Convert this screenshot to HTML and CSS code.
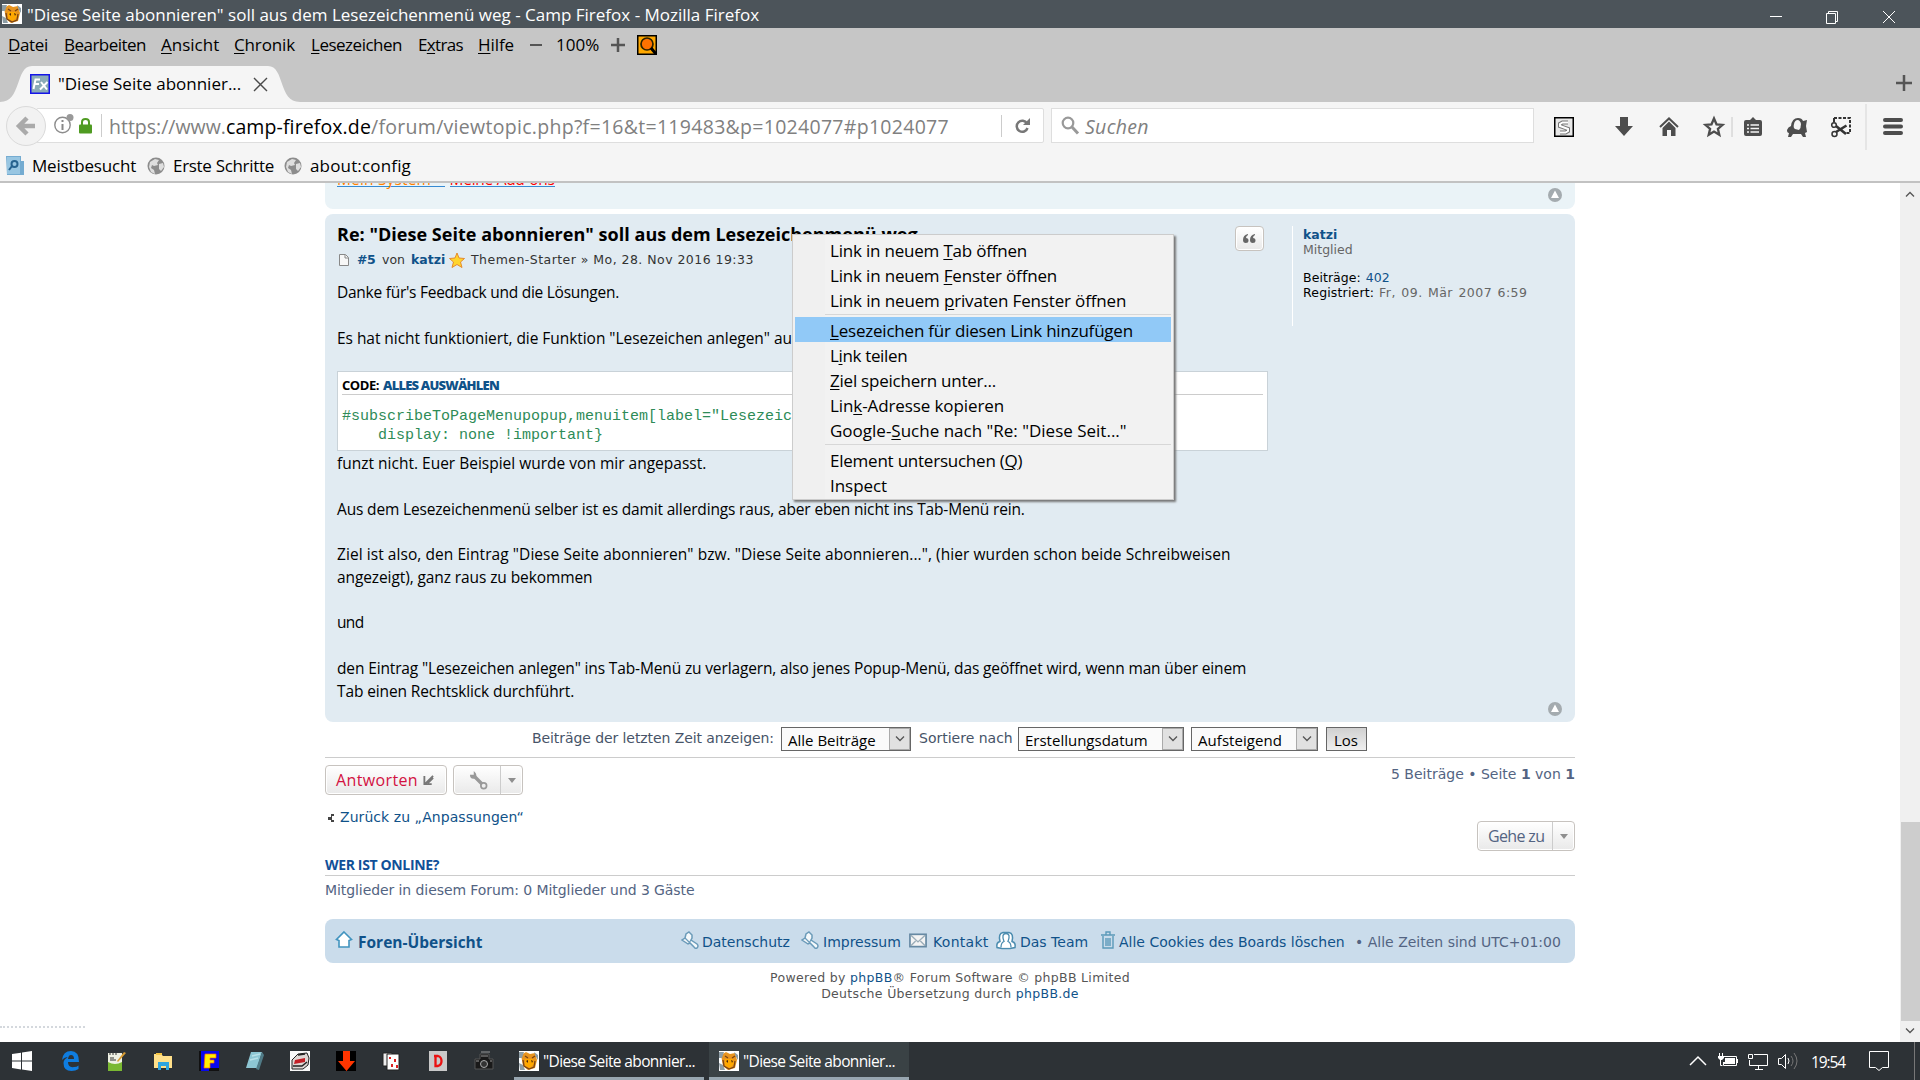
FILE: index.html
```html
<!DOCTYPE html>
<html lang="de">
<head>
<meta charset="utf-8">
<title>Camp Firefox</title>
<link rel="stylesheet" href="styles.css">
</head>
<body>
<svg width="0" height="0" class="defs">
  <symbol id="fox" viewBox="0 0 20 20"><rect width="20" height="20" fill="#fff"/><path d="M2 4 7 1l4 2 5-1 2 7-2 8-7 2-5-4z" fill="#e8941f"/><path d="M0 1h5L3 7H0zM0 12l4 2 2 5H1zM15 1l4 3v5l-2-3z" fill="#8d9da5"/><path d="M6 8h8l1 5-4 4-5-2z" fill="#ffa800"/><path d="M4 9l1 6 5 3 5-2 1-6M6 5l3 2m4 0 3-2" fill="none" stroke="#7a4312" stroke-width="1.300"/><path d="m7 10 2-1v3zm5-1 2 1-1 2z" fill="#4b2509"/></symbol>
  <symbol id="globe" viewBox="0 0 18 18"><circle cx="9" cy="9" r="8.500" fill="#8c8c8c"/><path d="M3 5 8 2l4 1-2 3 1 2-4 1-2-1-1 3 3 2 1 4-4-2-2-5zM12 7l4-1 1 4-3 4-2-2z" fill="#dedede"/></symbol>
  <symbol id="up" viewBox="0 0 14 14"><circle cx="7" cy="7" r="7" fill="#a4abaf"/><path d="M7 2.500 11 10H3z" fill="#fff"/></symbol>
  <symbol id="pin" viewBox="0 0 18 18"><path d="M8 1 11 4v3l-1 2 6 4q2 2 0 4-2 1-3-1L9 12l-2 1-6-4 3-2 1-4z" fill="#f5f9fb" stroke="#6b9bb9" stroke-width="1.500"/><path d="m4 7 4 4M10 9l-2 3" stroke="#6b9bb9" stroke-width="1.200"/></symbol>
  <symbol id="chev" viewBox="0 0 10 6"><path d="m1 .5 4 4 4-4" fill="none" stroke="#555" stroke-width="1.300"/></symbol>
  <symbol id="caret" viewBox="0 0 8 5"><path d="M0 0h8L4 5z" fill="#8f8f8f"/></symbol>
</svg>

<header class="titlebar">
  <svg class="i20"><use href="#fox"/></svg>
  <span class="title">"Diese Seite abonnieren" soll aus dem Lesezeichenmenü weg - Camp Firefox - Mozilla Firefox</span>
  <svg class="wctl" viewBox="0 0 130 14" fill="none" stroke="#fff"><path d="M0 6.500h12"/><path d="M56.500 3.500h9v10h-9zM58.500 3v-1.500h9v10h-2"/><path d="m113 1 12 12m0-12-12 12"/></svg>
</header>

<nav class="menubar">
  <span class="n34"><u>D</u>atei</span><span class="n52"><u>B</u>earbeiten</span><span><u>A</u>nsicht</span><span class="n14"><u>C</u>hronik</span><span class="n49"><u>L</u>esezeichen</span><span class="n65">E<u>x</u>tras</span><span class="n08"><u>H</u>ilfe</span>
  <svg viewBox="0 0 14 14"><path d="M0 7h12" stroke="#555" stroke-width="2"/></svg><span>100%</span><svg viewBox="0 0 14 14"><path d="M0 7h14M7 0v14" stroke="#555" stroke-width="2.500"/></svg>
  <svg class="i20" viewBox="0 0 20 20"><rect x=".75" y=".75" width="18.500" height="18.500" fill="#ffa800" stroke="#000" stroke-width="1.500"/><circle cx="10" cy="9" r="6" fill="#ff7200" stroke="#2d2200" stroke-width="1.700"/><path d="m14 13 5 6" stroke="#000" stroke-width="3"/></svg>
</nav>

<div class="tabs">
  <div class="tab">
    <svg class="tabshape" viewBox="0 0 300 36"><path d="M0 36C22 36 15 0 32 0H268C285 0 278 36 300 36z" fill="#f5f5f5"/></svg>
    <svg class="fav" viewBox="0 0 20 20"><rect x=".75" y=".75" width="18.500" height="18.500" fill="#8bacb8" stroke="#1515e8" stroke-width="1.500"/><path d="M3.500 15 5.500 5.500H10M5 10h4M11 8l6 7.500M17.500 8 10 15.500" stroke="#fff" stroke-width="2" fill="none"/></svg>
    <span class="tabtext">"Diese Seite abonnier...</span>
    <svg class="tabx" viewBox="0 0 13 13"><path d="m0 0 13 13m0-13L0 13" stroke="#4a4a4a" stroke-width="1.400"/></svg>
  </div>
  <svg class="newtab" viewBox="0 0 16 16"><path d="M0 8h16M8 0v16" stroke="#555" stroke-width="2.500"/></svg>
</div>

<div class="toolbar">
  <div class="url">
    <svg class="back" viewBox="0 0 40 40"><circle cx="20" cy="20" r="19.500" fill="#f2f2f2" stroke="#dadada"/><path d="M29 20H14m7-8-8 8 8 8" fill="none" stroke="#aaa" stroke-width="4.500"/></svg>
    <svg class="info" viewBox="0 0 20 20"><circle cx="8.500" cy="11" r="7.700" fill="none" stroke="#8c8c8c" stroke-width="1.400"/><path d="M8.500 6v2m0 2v6" stroke="#888" stroke-width="2"/><circle cx="16" cy="3.500" r="3.500" fill="#999"/></svg>
    <svg class="lock" viewBox="0 0 13 16"><rect y="6.500" width="13" height="9" rx="1" fill="#4f9b22"/><path d="M3 8V4q0-3 3.500-3T10 4v4" fill="none" stroke="#4f9b22" stroke-width="2"/></svg>
    <span class="urltext"><span>https://www.</span><b class="p11">camp-firefox.de</b><span class="p29">/forum/viewtopic.php?f=16&amp;t=119483&amp;p=1024077#p1024077</span></span>
    <svg class="reload" viewBox="0 0 15 16"><path d="M12 5.500A5.500 5.500 0 1 0 12.500 10" fill="none" stroke="#777" stroke-width="2.500"/><path d="M15 0v7H8z" fill="#777"/></svg>
  </div>
  <div class="search">
    <svg viewBox="0 0 18 18"><circle cx="7" cy="7" r="5.300" fill="none" stroke="#999" stroke-width="2.200"/><path d="m11 11 6 6.500" stroke="#999" stroke-width="3"/></svg>
    <i class="p29">Suchen</i>
  </div>
  <div class="tools">
    <svg viewBox="0 0 20 20"><rect x=".75" y=".75" width="18.500" height="18.500" fill="#e8e8e8" stroke="#000" stroke-width="1.500"/><path d="M14 5.500H8.500L6 7v2l8 3v2l-2.500 1.500H6" fill="none" stroke="#777" stroke-width="4"/><path d="M14 5.500H8.500L6 7v2l8 3v2l-2.500 1.500H6" fill="none" stroke="#fff" stroke-width="2"/></svg>
    <svg viewBox="0 0 20 20"><path d="M6 0h8v9h5l-9 10-9-10h5z" fill="#4d4d4d"/></svg>
    <svg viewBox="0 0 20 20"><path d="m1 10 9-8.500 9 8.500" fill="none" stroke="#4d4d4d" stroke-width="2"/><path d="m3.500 11 6.500-6.500 6.500 6.500v8H12v-6H8v6H3.500z" fill="#4d4d4d"/></svg>
    <svg viewBox="0 0 20 20"><path d="m10 1.500 2.500 5.800 6 .5-4.600 4 1.400 6-5.300-3.200-5.300 3.200 1.400-6-4.600-4 6-.5z" fill="none" stroke="#4d4d4d" stroke-width="2.300"/></svg>
    <svg viewBox="0 0 20 20"><path d="M10 0v20" stroke="#c8c8c8"/></svg>
    <svg viewBox="0 0 20 20"><path d="M3 3h4l3-3 3 3h4q2 0 2 2v12q0 2-2 2H3q-2 0-2-2V5q0-2 2-2z" fill="#4d4d4d"/><path d="M4 8h2m1.500 0H16M4 11.500h2m1.500 0H16M4 15h2m1.500 0H16" stroke="#f5f5f5" stroke-width="1.700"/></svg>
    <svg viewBox="0 0 20 20"><path d="M0 13q1-3 4-4 1-8 7-8 4 0 5 3l4-1-1 6 1 6-2 1 1 4h-3l-2-3H6l-2 3H1l1-4q-2 0-2-3z" fill="#4d4d4d"/><path d="M8 12q-2-1-1-5 1-4 3.500-4T14 7q0 4-2 6z" fill="#f5f5f5"/></svg>
    <svg viewBox="0 0 20 20" fill="none" stroke="#333"><path d="M3 1h16v15h-4" stroke-width="2" stroke-dasharray="3 1.500"/><path d="M3 1v4" stroke-width="2"/><circle cx="3" cy="8" r="2.300" stroke-width="1.500"/><circle cx="3.500" cy="17" r="2.500" stroke-width="1.500"/><path d="m5 9 10 8M5 15 15.500 8.500" stroke-width="2.600"/></svg>
    <svg class="longsep" viewBox="0 0 20 46"><path d="M10 0v46" stroke="#d5d5d5"/></svg>
    <svg viewBox="0 0 20 20"><path d="M2 3h16M2 9.500h16M2 16h16" stroke="#4d4d4d" stroke-width="4" stroke-linecap="round"/></svg>
  </div>
</div>

<div class="bookmarks">
  <svg class="i20" viewBox="0 0 20 20"><path d="M0 0h15v5h3v14H1z" fill="#75acd1"/><path d="M1 1h13v17H1z" fill="#98c6e2"/><circle cx="8.500" cy="8" r="3" fill="none" stroke="#27638f" stroke-width="2"/><path d="m6 10-3 4" stroke="#27638f" stroke-width="2"/></svg><span class="n20">Meistbesucht</span>
  <svg class="i18"><use href="#globe"/></svg><span class="n31">Erste Schritte</span>
  <svg class="i18"><use href="#globe"/></svg><span class="p16">about:config</span>
</div>

<div class="viewport">
<main>
  <section class="prev">
    <div class="sig"><span class="s1 p16">Mein System - </span><span class="s2 n29">Meine Add-ons</span></div>
    <svg class="up"><use href="#up"/></svg>
  </section>

  <article class="post">
    <div class="postbody">
      <div class="posthead">
        <h3>Re: "Diese Seite abonnieren" soll aus dem Lesezeichenmenü weg</h3>
        <span class="quote"><svg viewBox="0 0 13 9"><path d="M5 0Q0 1 0 6q0 3 2.800 3Q5.500 9 5.500 6.500T3 4Q3 2 5 1zM12 0Q7 1 7 6q0 3 2.800 3 2.700 0 2.700-2.500T10 4q0-2 2-3z" fill="#666"/></svg></span>
      </div>
      <p class="author">
        <svg viewBox="0 0 10 12"><path d="M.5.500h6l3 3v8h-9z" fill="#f7f7f7" stroke="#888"/><path d="M6 1v3h3" fill="none" stroke="#888"/></svg>
        <b class="n52">#5</b><span>von</span><b>katzi</b>
        <svg viewBox="0 0 16 16"><path d="m8 1 2 5 5.500.5-4 3.500 1.500 5.500-5-3-5 3L4.500 10l-4-3.500L6 6z" fill="#ffd52d" stroke="#e58b2d"/></svg>
        <span class="p46">Themen-Starter » Mo, 28. Nov 2016 19:33</span>
      </p>
      <p class="txt"><span class="n26">Danke für's Feedback und die Lösungen.</span><br><br><span class="n05">Es hat nicht funktioniert, die Funktion "Lesezeichen anlegen" au</span></p>
      <div class="codebox">
        <p><span class="n45">CODE:</span> <b class="n79">ALLES AUSWÄHLEN</b></p>
        <pre>#subscribeToPageMenupopup,menuitem[label="Lesezeic
    display: none !important}</pre>
      </div>
      <p class="txt after"><span>funzt nicht. Euer Beispiel wurde von mir angepasst.</span><br><br><span class="n16">Aus dem Lesezeichenmenü selber ist es damit allerdings raus, aber eben nicht ins Tab-Menü rein.</span><br><br><span class="p06">Ziel ist also, den Eintrag "Diese Seite abonnieren" bzw. "Diese Seite abonnieren...", (hier wurden schon beide Schreibweisen</span><br><span class="n10">angezeigt), ganz raus zu bekommen</span><br><br><span class="n65">und</span><br><br><span class="n14">den Eintrag "Lesezeichen anlegen" ins Tab-Menü zu verlagern, also jenes Popup-Menü, das geöffnet wird, wenn man über einem</span><br><span class="n12">Tab einen Rechtsklick durchführt.</span></p>
    </div>
    <aside class="profile">
      <p><b>katzi</b></p><p class="g">Mitglied</p><br>
      <p><span class="p06">Beiträge:</span> <a>402</a></p>
      <p><span class="p16">Registriert:</span> <span class="g p46">Fr, 09. Mär 2007 6:59</span></p>
    </aside>
    <svg class="up"><use href="#up"/></svg>
  </article>

  <div class="options">
    <span class="n08">Beiträge der letzten Zeit anzeigen:</span>
    <span class="select"><span>Alle Beiträge</span><i><svg><use href="#chev"/></svg></i></span>
    <span>Sortiere nach</span>
    <span class="select"><span>Erstellungsdatum</span><i><svg><use href="#chev"/></svg></i></span>
    <span class="select"><span class="p06">Aufsteigend</span><i><svg><use href="#chev"/></svg></i></span>
    <span class="los">Los</span>
  </div>

  <div class="actions">
    <span class="btn reply"><span class="p37">Antworten</span><svg viewBox="0 0 12 12"><path d="M1.500 1v9h8M2 10l9-9M5 9l6-6" fill="none" stroke="#777" stroke-width="2"/></svg></span>
    <span class="btn wrench"><svg viewBox="0 0 20 20"><path d="m5 5 10 10" stroke="#999" stroke-width="3.500"/><path d="M1 4q0 5 5 4 3-2 1-6L5 0v4H2z" fill="#999"/><circle cx="15.500" cy="15.500" r="3" fill="#eee" stroke="#999" stroke-width="1.800"/></svg><i><svg class="caret"><use href="#caret"/></svg></i></span>
    <span class="pages">5 Beiträge • Seite <b>1</b> von <b>1</b></span>
  </div>
  <div class="backrow"><svg viewBox="0 0 6 8"><path d="M6 0v2H4v4h2v2H3V6H0V3h3V0z" fill="#444"/></svg><a class="p06">Zurück zu „Anpassungen“</a></div>
  <div class="jump"><span class="btn"><span class="n65">Gehe zu</span><i><svg class="caret"><use href="#caret"/></svg></i></span></div>
  <h4 class="n34">WER IST ONLINE?</h4>
  <p class="online n08">Mitglieder in diesem Forum: 0 Mitglieder und 3 Gäste</p>

  <footer class="navbar">
    <svg viewBox="0 0 18 18"><path d="m8 1 7.500 7.500-2.500 1V16H3V9.500L.5 8.500z" fill="#fff" stroke="#4294bf" stroke-width="1.600"/></svg><b>Foren-Übersicht</b>
    <svg><use href="#pin"/></svg><a>Datenschutz</a>
    <svg><use href="#pin"/></svg><a>Impressum</a>
    <svg viewBox="0 0 19 16"><rect x="1" y="2" width="17" height="13" fill="#f4f4f4" stroke="#6689a3" stroke-width="1.800"/><path d="m2 3 7.500 7L17 3M2 14l5-5m5 0 5 5" fill="none" stroke="#9badb8" stroke-width="1.500"/></svg><a class="p29">Kontakt</a>
    <svg viewBox="0 0 18 17"><path d="M0 16q-1-5 3-6Q1 2 6 1h6q5 1 3 9 4 1 3 6l-5 1H5z" fill="#fff" stroke="#4b8caf" stroke-width="1.500"/><path d="M4 16q0-5 3-6Q4 2 9 2t2 8q3 1 3 6" fill="#fff" stroke="#4b8caf" stroke-width="1.300"/></svg><a>Das Team</a>
    <svg viewBox="0 0 18 18"><path d="M1 4h14M6 4V1h4v3M3 5v12h10V5M6 7v8m2-8v8m2-8v8" fill="none" stroke="#5b99b9" stroke-width="1.400"/></svg><a>Alle Cookies des Boards löschen</a>
    <span>• Alle Zeiten sind UTC+01:00</span>
  </footer>
  <div class="copy"><p>Powered by <a>phpBB</a>® Forum Software © phpBB Limited</p><p>Deutsche Übersetzung durch <a>phpBB.de</a></p></div>
</main>
<div class="scroll"><svg class="sa"><use href="#chev"/></svg><div class="thumb"></div><svg><use href="#chev"/></svg></div>
<div class="tiny"></div>
</div>

<div class="ctx">
  <div class="n20">Link in neuem <u>T</u>ab öffnen</div>
  <div class="n18">Link in neuem <u>F</u>enster öffnen</div>
  <div class="n16">Link in neuem <u>p</u>rivaten Fenster öffnen</div>
  <hr>
  <div class="hl n21"><u>L</u>esezeichen für diesen Link hinzufügen</div>
  <div class="n34">L<u>i</u>nk teilen</div>
  <div class="n23"><u>Z</u>iel speichern unter...</div>
  <div class="n10">Lin<u>k</u>-Adresse kopieren</div>
  <div>Google-<u>S</u>uche nach "Re: "Diese Seit..."</div>
  <hr>
  <div class="n23">Element untersuchen (<u>Q</u>)</div>
  <div class="n05">Inspect</div>
</div>

<footer class="taskbar">
  <svg viewBox="0 0 20 20"><path d="m0 3 9-1.300V9.500H0zM10 1.500 20 0v9.500H10zM0 10.500h9v8L0 17zM10 10.500h10V20l-10-1.500z" fill="#fff"/></svg>
  <svg viewBox="0 0 20 20"><path d="M1 9Q2 0 10 0q8 0 8 11H7q0 6 6 5 3 0 4.500-1.500V18q-3 2-7 2-8 0-8-8 0-4 5-6-4 0-6.500 3zm6-1h6q0-4-3-4Q7.500 4 7 8z" fill="#0f7de0"/></svg>
  <svg viewBox="0 0 20 20"><path d="M1 2h14v18H1z" fill="#eef0e4"/><path d="M1 11q7 4 14 0v9H1z" fill="#7ab832"/><path d="m10 10 7-9 2 1-8 9z" fill="#d79b32"/><path d="M4 6v4m2-4v4m2-2v2M3 2v2m3-2v2m3-2v2" stroke="#333"/></svg>
  <svg viewBox="0 0 20 20"><path d="M1 3h7l2 2h9v12H1z" fill="#ffe08a"/><path d="M3 2h6v2H3z" fill="#f4c544"/><path d="M5 11h11v8h-3v-4H8v4H5z" fill="#2fa5df"/></svg>
  <svg viewBox="0 0 20 20"><path d="M0 0h20v20H0z" fill="#0808ee"/><path d="M0 0h2v20H0zM10 17h10v3H10z" fill="#111"/><path d="M6 3h11v4h-6v2h4v3h-4v5H5z" fill="#fff000" stroke="#f60" stroke-width=".7"/></svg>
  <svg viewBox="0 0 20 20"><path d="M6 1h11l-5 16H1z" fill="#8dc6d3"/><path d="m17 1 2 3-5 15-3-1z" fill="#507b87"/><path d="m7 5 8-2M5 9l8-2" stroke="#b9e0e8" stroke-width="1.500"/></svg>
  <svg viewBox="0 0 20 20"><path d="M0 0h20v20H0z" fill="#f8f8f8"/><path d="M2 9 8 3l9-1 2 5-1 7-5 4H2z" fill="#ded7d4" stroke="#222"/><path d="m5 9 10-2v4L4 13z" fill="#c21f27"/><path d="M3 15h9l5-4M8 4l7-1" fill="none" stroke="#222" stroke-width="1.500"/></svg>
  <svg viewBox="0 0 20 20"><path d="M0 0h20v20H0z" fill="#000"/><path d="M7 0h7v10h5l-8.500 10L2 10h5z" fill="#ff3500"/></svg>
  <svg viewBox="0 0 20 20"><path d="M1 2h9v13H1z" fill="#eee" stroke="#222"/><path d="M5 3h12v16H5z" fill="#fff" stroke="#222"/><path d="M7 6h2v2H7zm5 2h2v3h-2zm-3 5h2v3H9zm5 1h2v3h-2z" fill="#d22"/></svg>
  <svg viewBox="0 0 20 20"><path d="M1 0h18v20H1z" fill="#c9c9c9"/><path d="M7.500 5v10H10q3.500-1 3.500-5T10 5H6" fill="none" stroke="#ea1111" stroke-width="2.300"/></svg>
  <svg viewBox="0 0 20 20"><path d="M1 8h5V3h9v5h4v10H1z" fill="#191919" stroke="#555"/><circle cx="10" cy="13" r="3.500" fill="#333" stroke="#aaa"/><path d="M7 1h9M7 5h7M2 10h3m11 0h2" stroke="#999"/></svg>
  <div class="task"><svg><use href="#fox"/></svg><span>"Diese Seite abonnier...</span></div>
  <div class="task on"><svg><use href="#fox"/></svg><span>"Diese Seite abonnier...</span></div>
  <div class="tray">
    <svg viewBox="0 0 20 20" fill="none" stroke="#fff"><path d="m2 14 8-8 8 8" stroke-width="1.500"/></svg>
    <svg viewBox="0 0 20 20"><path d="M5.500 5.500h13v9h-13v-3M19.500 8v4" fill="none" stroke="#fff"/><path d="M7 7h10v6H5v-2h2z" fill="#fff"/><path d="M1.500 2v3m3-3v3M2.500 8v6.500h2" fill="none" stroke="#fff"/><path d="M0 5h6v2L4 9H2L0 7z" fill="#fff"/></svg>
    <svg viewBox="0 0 20 20" fill="none" stroke="#fff"><path d="M6 3.500h13.500v11H1.500V9M10.500 15v3M7 18.500h8M.5 3.500h4v4h-4z"/></svg>
    <svg viewBox="0 0 20 20" fill="none" stroke="#fff"><path d="M.5 7.500h3l4-4v14l-4-4h-3z"/><path d="M10 7q2 3 0 6"/><path d="M13 5q4 5 0 10m3-13q6 8 0 16" stroke="#777"/></svg>
    <span class="time">19:54</span>
    <svg viewBox="0 0 20 20" fill="none" stroke="#fff"><path d="M.5.500h19v16h-6L10 19.500 6.500 16.500h-6z"/></svg>
  </div>
</footer>
</body>
</html>
```
FILE: styles.css
```css
* { box-sizing: border-box; }
body { margin: 0; width: 1920px; height: 1080px; overflow: hidden; background: #fff; font-family: "Open Sans", sans-serif; font-size: 17px; color: #000; }
p, h3, h4, pre { margin: 0; font-weight: normal; }
span, b, a, i, h3, .ctx div { white-space: nowrap; }
svg { display: block; flex: none; overflow: visible; }
.defs { position: absolute; }
.i20 { width: 20px; height: 20px; }
.i18 { width: 18px; height: 18px; }
u { text-decoration-thickness: 1px; text-underline-offset: 2px; }

/* letter-spacing steps: n = tighter, p = wider, in hundredths of a pixel */
.n05 { letter-spacing: -.05px; }
.n08 { letter-spacing: -.08px; }
.n10 { letter-spacing: -.1px; }
.n12 { letter-spacing: -.12px; }
.n14 { letter-spacing: -.14px; }
.n16 { letter-spacing: -.16px; }
.n18 { letter-spacing: -.18px; }
.n20 { letter-spacing: -.2px; }
.n21 { letter-spacing: -.21px; }
.n23 { letter-spacing: -.23px; }
.n26 { letter-spacing: -.26px; }
.n29 { letter-spacing: -.29px; }
.n31 { letter-spacing: -.31px; }
.n34 { letter-spacing: -.35px; }
.n45 { letter-spacing: -.45px; }
.n49 { letter-spacing: -.49px; }
.n52 { letter-spacing: -.52px; }
.n65 { letter-spacing: -.65px; }
.n79 { letter-spacing: -.79px; }
.p06 { letter-spacing: .06px; }
.p11 { letter-spacing: .11px; }
.p16 { letter-spacing: .16px; }
.p29 { letter-spacing: .29px; }
.p37 { letter-spacing: .37px; }
.p46 { letter-spacing: .46px; }

.titlebar { height: 28px; background: #4c545a; color: #fff; display: flex; align-items: center; padding-left: 2px; }
.titlebar .title { flex: 1; margin-left: 5px; line-height: 28px; padding-top: 1px; }
.wctl { width: 130px; height: 14px; margin: 6px 20px 0 0; }

.menubar { height: 31px; background: #c6c6c6; display: grid; grid-template-columns: 56px 97px 73px 77px 107px 60px 52px 26px 55px 26px 20px; padding: 1px 0 0 8px; align-items: center; line-height: 31px; }
.menubar svg { width: 14px; height: 14px; }
.menubar svg.i20 { width: 20px; height: 20px; }

.tabs { height: 43px; background: #c6c6c6; display: flex; justify-content: space-between; padding: 7px 8px 0 0; }
.tab { position: relative; width: 300px; height: 36px; display: flex; padding: 8px 0 0 30px; }
.tabshape { position: absolute; left: 0; top: 0; width: 300px; height: 36px; }
.fav { width: 20px; height: 20px; position: relative; }
.tabtext { position: relative; width: 182px; margin-left: 8px; line-height: 20px; }
.tabx { position: relative; width: 13px; height: 13px; margin: 4px 0 0 14px; }
.newtab { width: 16px; height: 16px; margin-top: 9px; }

.toolbar { height: 48px; background: #f5f5f5; display: flex; padding: 6px 0 0 36px; }
.url { width: 1008px; height: 35px; background: #fff; border: 1px solid #dedede; border-radius: 2px; display: flex; align-items: center; }
.back { width: 40px; height: 40px; margin-left: -31px; }
.info { width: 20px; height: 20px; margin: -3px 0 0 8px; }
.lock { width: 13px; height: 16px; margin-left: 5px; }
.urltext { font-size: 19.5px; color: #808080; border-left: 1px solid #ccc; margin-left: 9px; padding-left: 7px; line-height: 23px; height: 23px; width: 900px; }
.urltext > * { position: relative; top: 1px; }
.urltext b { color: #000; font-weight: normal; }
.reload { box-sizing: content-box; width: 15px; height: 16px; padding: 3px 0 3px 13px; border-left: 1px solid #ccc; }
.search { width: 483px; height: 35px; margin-left: 7px; background: #fff; border: 1px solid #dedede; display: flex; align-items: center; padding-left: 9px; }
.search svg { width: 18px; height: 18px; margin-top: -2px; }
.search i { font-size: 19.5px; color: #808080; margin-left: 6px; padding-top: 2px; }
.tools { display: grid; grid-template: 38px / 60px 45px 45px 18px 21px 44px 44px 25px 27px 20px; height: 36px; align-items: center; margin-left: 20px; }
.tools svg { width: 20px; height: 20px; }
.tools .longsep { height: 46px; }

.bookmarks { height: 33px; background: #f5f5f5; border-bottom: 2px solid #c2c2c2; display: grid; grid-template-columns: 26px 115px 26px 111px 26px 120px; align-items: center; padding-left: 6px; line-height: 30px; }
.bookmarks span { padding-top: 1px; }

.viewport { height: 859px; position: relative; display: flex; font-family: "DejaVu Sans", sans-serif; font-size: 14px; color: #536482; }
main { width: 1250px; margin-left: 325px; }
a { color: #105289; }
.up { width: 14px; height: 14px; }
.prev { height: 26px; background: #eaf3f7; border-radius: 0 0 8px 8px; display: flex; justify-content: space-between; padding: 0 13px 0 12px; overflow: hidden; }
.prev .up { margin-top: 5px; }
.sig { font: 15.5px/20px "Open Sans", sans-serif; margin-top: -14px; display: flex; gap: 5px; height: 18px; }
.s1 { color: #ff8000; border-bottom: 1px solid #368ad2; white-space: pre; }
.s2 { color: #f00; border-bottom: 1px solid #368ad2; }

.post { margin-top: 5px; height: 508px; background: #e1ebf2; border-radius: 8px; display: grid; grid-template-columns: 955px 256px 14px; padding: 8px 12px; color: #000; }
.post > .up { align-self: end; margin-bottom: -2px; }
.postbody { width: 931px; }
.posthead { display: flex; justify-content: space-between; height: 28px; }
.posthead h3 { font: bold 18px/24px "Open Sans", sans-serif; letter-spacing: .03px; }
.quote { width: 29px; height: 25px; margin: 4px 4px 0 0; border: 1px solid #c7c3bf; border-radius: 4px; background: linear-gradient(#fff, #e9e9e9); display: flex; align-items: center; justify-content: center; box-shadow: inset 0 0 0 1px #fff; }
.quote svg { width: 13px; height: 9px; }
.author { font-size: 12.5px; color: #333; height: 19px; display: grid; grid-template-columns: 18px 25px 29px 38px 22px 290px; align-items: center; padding-left: 2px; line-height: 19px; }
.author svg { width: 16px; height: 16px; }
.author svg:first-child { width: 10px; height: 12px; }
.author b, .profile b { color: #105289; }
.txt { font: 15.5px/22.75px "Open Sans", sans-serif; padding-top: 12px; height: 102px; }
.txt.after { padding-top: 1px; height: 250px; }
.codebox { height: 80px; background: #fff; border: 1px solid #c9d2d8; padding: 4px; }
.codebox p { font: bold 13px/19px "Open Sans", sans-serif; border-bottom: 1px solid #ccc; color: #000; height: 19px; display: flex; gap: 4px; }
.codebox b { color: #105289; }
.codebox pre { font: 15px/19px "Liberation Mono", monospace; color: #2e8b57; padding-top: 12px; }
.profile { border-left: 1px solid #fff; margin-top: 4px; height: 100px; padding: 1px 0 0 10px; font-size: 12.5px; line-height: 15px; }
.profile br { line-height: 12px; }
.profile .g { color: #666; }
.profile p + p:nth-of-type(n+3) { margin-top: -.5px; }
.profile p:nth-of-type(n+3) { word-spacing: 1px; position: relative; top: -2px; }

.options { height: 36px; border-bottom: 1px solid #ccc; display: grid; grid-template-columns: 249px 138px 99px 173px 135px 41px; padding: 5px 0 0 207px; line-height: 22px; color: #475468; }
.select { display: flex; height: 24px; border: 1px solid #666; width: 130px; background: #fafafa; justify-content: space-between; color: #000; padding-left: 6px; line-height: 24px; font-family: "Open Sans", sans-serif; font-size: 15px; }
.select:nth-child(4) { width: 166px; }
.select:nth-child(5) { width: 127px; }
.select i { width: 21px; height: 22px; background: #e1e1e1; border: 1px solid #aaa; display: flex; align-items: center; justify-content: center; }
.select svg { width: 10px; height: 6px; }
.los { height: 24px; border: 1px solid #666; background: linear-gradient(#d0d0d0, #efefef); color: #000; padding-left: 7px; line-height: 24px; font: 15px/24px "Open Sans", sans-serif; }
.actions { display: flex; padding-top: 7px; height: 45px; }
.btn { height: 30px; border: 1px solid #c7c3bf; border-radius: 4px; background: linear-gradient(#fff, #e9e9e9); box-shadow: inset 0 0 0 1px #fff; display: flex; align-items: center; padding-left: 10px; font-family: "Open Sans", sans-serif; font-size: 16px; }
.btn i { border-left: 1px solid #ccc; height: 28px; width: 22px; display: flex; align-items: center; justify-content: center; }
.caret { width: 8px; height: 5px; }
.reply { width: 122px; color: #d31141; gap: 5px; }
.reply svg { width: 11px; height: 11px; }
.wrench { width: 70px; margin-left: 6px; padding-left: 15px; justify-content: space-between; }
.wrench > svg { width: 19px; height: 19px; }
.pages { margin-left: auto; line-height: 18px; }
.backrow { display: flex; align-items: center; height: 30px; padding: 0 0 2px 3px; gap: 6px; }
.backrow svg { width: 6px; height: 8px; margin-top: 2px; }
.jump { display: flex; justify-content: flex-end; margin-top: -12px; }
.jump .btn { width: 98px; justify-content: space-between; }
h4 { margin-top: 5px; height: 20px; border-bottom: 1px solid #ccc; font: bold 14px/18px "Open Sans", sans-serif; color: #115098; }
.online { height: 43px; line-height: 29px; }
.navbar { height: 44px; border-radius: 8px; background: #cadceb; display: grid; grid-template-columns: 21px 324px 20px 100px 21px 87px 23px 65px 22px 81px 18px 236px 207px; align-items: center; padding-left: 12px; }
.navbar > * { padding-top: 1px; }
.navbar svg { width: 18px; height: 18px; margin: -3px 0 0 -1px; padding: 0; }
.navbar b { color: #105289; font-family: "Open Sans", sans-serif; font-size: 15.5px; }
.copy { padding-top: 7px; text-align: center; font-size: 12.5px; line-height: 16px; color: #555; letter-spacing: .32px; }

.scroll { position: absolute; right: 0; top: 0; width: 20px; height: 859px; background: #f0f0f0; display: flex; flex-direction: column; align-items: center; padding: 8px 0; }
.scroll svg { width: 10px; height: 6px; }
.scroll .sa { transform: rotate(180deg); }
.thumb { width: 19px; height: 200px; background: #cdcdcd; margin: 625px 0 7px; }
.tiny { position: absolute; left: 0; top: 843px; width: 85px; border-top: 2px dotted #d4d8dd; }

.ctx { position: absolute; left: 792px; top: 234px; width: 382px; height: 266px; border: 1px solid #ccc; background: linear-gradient(90deg, #f0f0f0 32px, #f2f2f2 32px); box-shadow: 2px 2px 2px #777; padding: 2px; }
.ctx div { height: 25px; line-height: 28px; padding-left: 35px; }
.ctx .hl { background: #91c9f7; }
.ctx hr { border: 0; height: 1px; background: #d7d7d7; margin: 2px 0 2px 30px; }

.taskbar { height: 38px; background: #2d3236; display: grid; grid-template-columns: 49px 46px 46px 46px 46px 45px 46px 46px 46px 46px 40px 195px 200px 1fr; padding-left: 12px; align-items: center; color: #fff; font-size: 15.5px; }
.taskbar svg { width: 20px; height: 20px; }
.task { width: 190px; height: 38px; display: flex; align-items: center; border-bottom: 3px solid #98a6b0; padding: 3px 0 0 5px; gap: 4px; letter-spacing: -.63px; }
.task.on { width: 200px; background: #3a4245; padding-left: 10px; }
.tray { height: 38px; display: grid; grid-template-columns: 30px 30px 30px 33px 58px 20px; align-items: center; margin-left: 779px; border-right: 1px solid #777; margin-right: 5px; }
.time { letter-spacing: -1.1px; padding-top: 1px; }
```
